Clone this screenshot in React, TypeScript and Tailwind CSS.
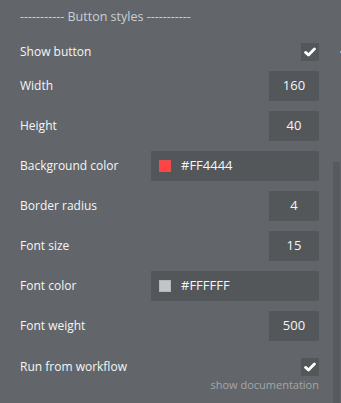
const font = { fontFamily: '"Open Sans", "Noto Sans", sans-serif' };

const Check = () => (
  <div className="w-[18px] h-[18px] bg-[#53575a] flex items-center justify-center">
    <svg width="12" height="10" viewBox="0 0 12 10">
      <path d="M1.6 5.4 L4.5 8 L10.4 2" fill="none" stroke="#ffffff" strokeWidth="2.8" strokeLinecap="round" strokeLinejoin="round" />
    </svg>
  </div>
);

const NumberRow = ({ label, value }: { label: string; value: string }) => (
  <div className="h-[30px] flex items-center justify-between">
    <span className="text-[12px] text-[#f4f6f7]">{label}</span>
    <div className="w-[50px] h-[30px] bg-[#53575a] flex items-center justify-center text-[13px] text-[#f4f6f7]">
      {value}
    </div>
  </div>
);

const ColorRow = ({ label, value, swatch }: { label: string; value: string; swatch: string }) => (
  <div className="h-[30px] flex items-center justify-between">
    <span className="text-[12px] text-[#f4f6f7]">{label}</span>
    <div className="w-[168px] h-[30px] bg-[#53575a] flex items-center pl-[8px] gap-[10px] text-[13px] text-[#f4f6f7]">
      <div className={`w-[12px] h-[12px] ${swatch}`} />
      <span>{value}</span>
    </div>
  </div>
);

const App = () => {
  return (
    <div className="w-[341px] h-[403px] bg-[#62666a] flex overflow-hidden" style={font}>
      <div className="flex-1 pl-[20px] pr-[14px] flex flex-col">
        <div className="mt-[8px] h-[18px] flex items-center text-[12.5px] text-[#c8d0d5]">
          ----------- Button styles -----------
        </div>
        <div className="mt-[17px] h-[18px] flex items-center justify-between">
          <span className="text-[12px] text-[#f4f6f7]">Show button</span>
          <Check />
        </div>
        <div className="mt-[10px] flex flex-col gap-[10px]">
          <NumberRow label="Width" value="160" />
          <NumberRow label="Height" value="40" />
          <ColorRow label="Background color" value="#FF4444" swatch="bg-[#ff4444] border border-[#e85050]" />
          <NumberRow label="Border radius" value="4" />
          <NumberRow label="Font size" value="15" />
          <ColorRow label="Font color" value="#FFFFFF" swatch="bg-[#c2c4c5] border border-[#b4b6b7]" />
          <NumberRow label="Font weight" value="500" />
        </div>
        <div className="mt-[17px] h-[18px] flex items-center justify-between">
          <span className="text-[12px] text-[#f4f6f7]">Run from workflow</span>
          <Check />
        </div>
        <div className="mt-[1px] text-right text-[11px] leading-[16px] text-[#a2a6a9]">show documentation</div>
      </div>
      <div className="w-[7px] flex flex-col">
        <div className="mt-[162px] flex-1 bg-[#575b5e]" />
      </div>
      <div className="w-[1px] flex flex-col">
        <div className="mt-[51px] h-[2px] bg-[#8fa6c8]" />
      </div>
    </div>
  );
};

export default App;
